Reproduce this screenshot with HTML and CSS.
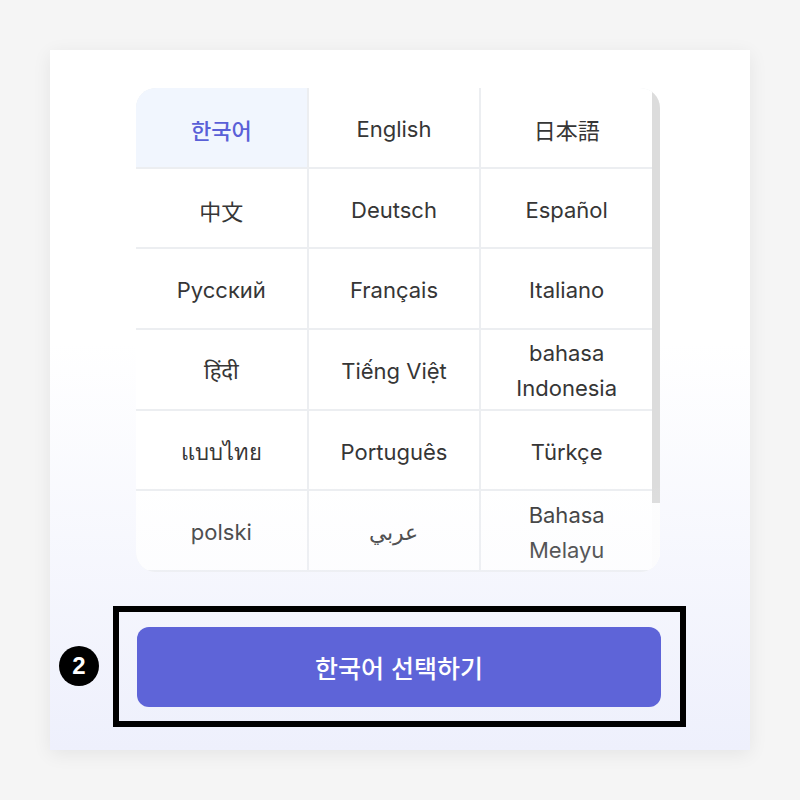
FILE: index.html
```html
<!DOCTYPE html>
<html lang="ko">
<head>
<meta charset="utf-8">
<title>언어 선택</title>
<link rel="stylesheet" href="styles.css">
</head>
<body>
<div class="card">
  <div class="lang-panel">
    <div class="lang-grid">
      <div class="cell selected">한국어</div>
      <div class="cell">English</div>
      <div class="cell cjk">日本語</div>
      <div class="cell cjk">中文</div>
      <div class="cell">Deutsch</div>
      <div class="cell">Español</div>
      <div class="cell">Русский</div>
      <div class="cell">Français</div>
      <div class="cell">Italiano</div>
      <div class="cell">हिंदी</div>
      <div class="cell">Tiếng Việt</div>
      <div class="cell">bahasa<br>Indonesia</div>
      <div class="cell">แบบไทย</div>
      <div class="cell">Português</div>
      <div class="cell">Türkçe</div>
      <div class="cell">polski</div>
      <div class="cell">عربي</div>
      <div class="cell">Bahasa<br>Melayu</div>
    </div>
    <div class="scroll-track"><div class="scroll-thumb"></div></div>
  </div>
  <div class="action">
    <button class="select-btn">한국어 선택하기</button>
    <div class="highlight"></div>
    <div class="badge">2</div>
  </div>
</div>
</body>
</html>
```
FILE: styles.css
```css
html, body {
  margin: 0;
  padding: 0;
}
body {
  background: #f5f5f5;
  font-family: Inter, "Noto Sans", "Noto Sans CJK KR", sans-serif;
}
.card {
  margin: 50px;
  width: 700px;
  height: 700px;
  box-sizing: border-box;
  padding: 38px 90px 0 86px;
  background: linear-gradient(180deg, #ffffff 0%, #ffffff 42%, #eef0fc 100%);
  box-shadow: 0 4px 18px rgba(0, 0, 0, 0.07);
  display: flex;
  flex-direction: column;
}
.lang-panel {
  position: relative;
  display: flex;
  width: 524px;
  height: 484px;
  overflow: hidden;
  border-radius: 20px;
  background: #ffffff;
}
.lang-panel::after {
  content: "";
  position: absolute;
  left: 0;
  right: 0;
  bottom: 0;
  height: 90px;
  background: linear-gradient(180deg, rgba(244, 245, 252, 0) 0%, rgba(244, 245, 252, 0.22) 100%);
  pointer-events: none;
}
.lang-grid {
  flex: 0 0 516px;
  display: grid;
  grid-template-columns: repeat(3, 1fr);
  grid-auto-rows: 78.7px;
  gap: 2px;
  padding-bottom: 2px;
  background: #eceef1;
  align-content: start;
}
.scroll-track {
  flex: 0 0 8px;
  background: #fdfdfd;
}
.scroll-thumb {
  height: 415px;
  background: #dcdcdc;
}
.cell {
  background: #ffffff;
  display: flex;
  align-items: center;
  justify-content: center;
  text-align: center;
  padding-top: 4px;
  font-size: 22px;
  line-height: 35px;
  color: #363636;
  font-family: Inter, "Noto Sans", "Noto Sans CJK KR", "Noto Sans CJK JP", sans-serif;
}
.cell.cjk {
  font-family: "Noto Sans CJK JP", "Noto Sans CJK SC", sans-serif;
}
.cell.selected {
  background: #f1f6fe;
  color: #5a60d7;
  font-weight: 500;
  font-family: "Noto Sans CJK KR", sans-serif;
}
.action {
  position: relative;
  margin-top: 55px;
  margin-left: 1px;
}
.select-btn {
  display: block;
  width: 524px;
  height: 80px;
  border: none;
  border-radius: 12px;
  background: #5e64d8;
  color: #ffffff;
  font-family: "Noto Sans CJK KR", sans-serif;
  font-size: 25px;
  font-weight: 500;
  cursor: pointer;
}
.highlight {
  position: absolute;
  left: -24px;
  top: -21px;
  width: 573px;
  height: 121px;
  box-sizing: border-box;
  border: 6px solid #000;
}
.badge {
  position: absolute;
  left: -78px;
  top: 19px;
  width: 40px;
  height: 40px;
  border-radius: 50%;
  background: #000;
  color: #fff;
  font-family: "Liberation Sans", Arial, sans-serif;
  font-weight: 700;
  font-size: 24px;
  display: flex;
  align-items: center;
  justify-content: center;
}
```
